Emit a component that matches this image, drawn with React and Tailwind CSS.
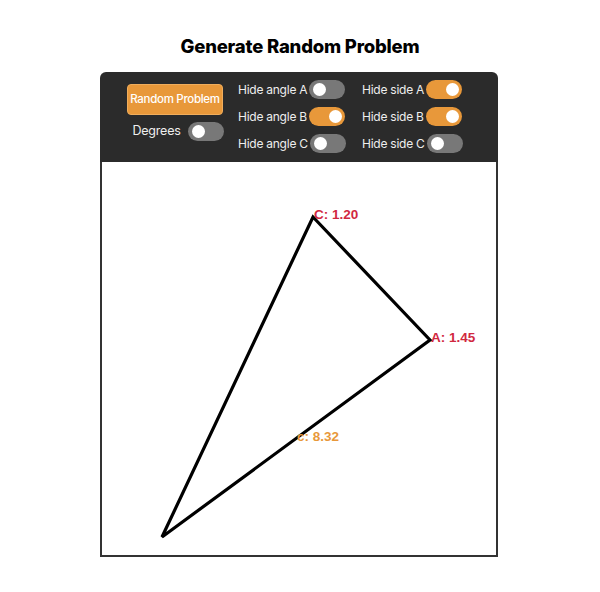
import { useState } from 'react';

function Toggle({ on }) {
  return (
    <span
      className={`relative inline-block h-[19px] w-[36px] shrink-0 rounded-full ${on ? 'bg-[#e8983a]' : 'bg-[#787878]'}`}
    >
      <span
        className={`absolute top-[3px] h-[13px] w-[13px] rounded-full bg-white ${on ? 'left-[20px]' : 'left-[4px]'}`}
      />
    </span>
  );
}

function Row({ label, on }) {
  return (
    <div className="flex h-[19px] items-center gap-[2px] whitespace-nowrap">
      <span className="text-[12px] leading-none tracking-[-0.25px] text-[#eeeeee]">{label}</span>
      <Toggle on={on} />
    </div>
  );
}

export default function App() {
  const [flags] = useState({
    angleA: false,
    angleB: true,
    angleC: false,
    sideA: true,
    sideB: true,
    sideC: false,
    degrees: false,
  });

  return (
    <div className="min-h-[592px] w-[600px] bg-white pt-[35px]" style={{ fontFamily: 'Inter, "Noto Sans", sans-serif' }}>
      <h1 className="text-center text-[18.5px] font-extrabold leading-[22px] tracking-[-0.2px] text-black">
        Generate Random Problem
      </h1>

      <div className="ml-[100px] mt-[15px] w-[398px]">
        <div className="flex h-[90px] items-start rounded-t-[6px] bg-[#2b2b2b] pl-[27px] pt-[8px]">
          <div className="flex w-[96px] flex-col items-center pt-[4px]">
            <button
              type="button"
              className="h-[31px] w-[96px] rounded-[4px] border border-[#f0ad5c] bg-[#e8983a] text-[11.5px] font-medium tracking-[-0.3px] text-white"
            >
              Random Problem
            </button>
            <div className="mt-[7px] flex items-center gap-[7px] whitespace-nowrap pl-[6px]">
              <span className="text-[12.5px] leading-none tracking-[-0.2px] text-[#eeeeee]">Degrees</span>
              <Toggle on={flags.degrees} />
            </div>
          </div>

          <div className="ml-[15px] flex w-[108px] flex-col gap-[8px]">
            <Row label="Hide angle A" on={flags.angleA} />
            <Row label="Hide angle B" on={flags.angleB} />
            <Row label="Hide angle C" on={flags.angleC} />
          </div>

          <div className="ml-[16px] flex flex-col gap-[8px]">
            <Row label="Hide side A" on={flags.sideA} />
            <Row label="Hide side B" on={flags.sideB} />
            <Row label="Hide side C" on={flags.sideC} />
          </div>
        </div>

        <div className="h-[395px] border-x-2 border-b-2 border-[#333333] bg-white">
          <svg width="394" height="393" viewBox="0 0 394 393">
            <polygon
              points="211,55 328,178 60,375"
              fill="none"
              stroke="#000"
              strokeWidth="3.2"
              strokeLinejoin="miter"
            />
            <g fontFamily='"Liberation Sans", Arial, sans-serif' fontWeight="700" fontSize="13.5">
              <text x="212" y="57" fill="#d1283f">C: 1.20</text>
              <text x="329" y="180" fill="#d1283f">A: 1.45</text>
              <text x="195" y="279" fill="#e8983a">c: 8.32</text>
            </g>
          </svg>
        </div>
      </div>
    </div>
  );
}
